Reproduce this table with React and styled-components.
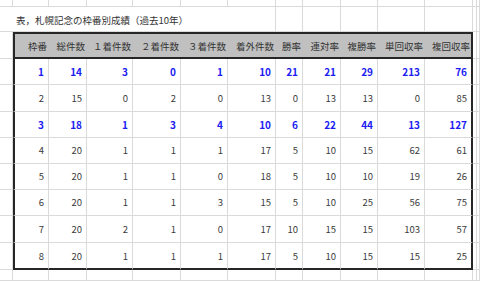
import React from 'react';
import styled, { createGlobalStyle } from 'styled-components';

const GlobalStyle = createGlobalStyle`
  html, body {
    margin: 0;
    padding: 0;
    background: #fff;
  }
`;

// column widths / row heights follow the spreadsheet in the screenshot
const COLS = [13, 36, 38, 46, 48, 47, 48, 27, 38, 37, 47, 48, 4];
const ROWS = [7, 25, 27, 26, 27, 26, 26, 26, 26, 27, 27];

const LINE = '#dadada';
const FRAME = '2px solid #262626';

const HEADERS = ['枠番', '総件数', '１着件数', '２着件数', '３着件数', '着外件数', '勝率', '連対率', '複勝率', '単回収率', '複回収率'];

const DATA = [
  { bold: true, values: [1, 14, 3, 0, 1, 10, 21, 21, 29, 213, 76] },
  { bold: false, values: [2, 15, 0, 2, 0, 13, 0, 13, 13, 0, 85] },
  { bold: true, values: [3, 18, 1, 3, 4, 10, 6, 22, 44, 13, 127] },
  { bold: false, values: [4, 20, 1, 1, 1, 17, 5, 10, 15, 62, 61] },
  { bold: false, values: [5, 20, 1, 1, 0, 18, 5, 10, 10, 19, 26] },
  { bold: false, values: [6, 20, 1, 1, 3, 15, 5, 10, 25, 56, 75] },
  { bold: false, values: [7, 20, 2, 1, 0, 17, 10, 15, 15, 103, 57] },
  { bold: false, values: [8, 20, 1, 1, 1, 17, 5, 10, 15, 15, 25] },
];

const Sheet = styled.div`
  width: 480px;
  height: 281px;
  overflow: hidden;
  display: grid;
  grid-template-columns: ${COLS.map((w) => `${w}px`).join(' ')} 1fr;
  grid-template-rows: ${ROWS.map((h) => `${h}px`).join(' ')} 1fr;
  font-family: "Noto Sans CJK JP", "Noto Sans", sans-serif;
  font-size: 9.5px;
  color: #3a3a3a;
  background: #fff;
`;

const GridCell = styled.div`
  box-sizing: border-box;
  border-right: 1px solid ${LINE};
  border-bottom: 1px solid ${LINE};
`;

const TitleCell = styled(GridCell)`
  grid-column: span 7;
  display: flex;
  align-items: center;
  padding: 1px 0 0 16px;
  color: #333;
  white-space: nowrap;
`;

const HeadCell = styled.div`
  box-sizing: border-box;
  background: #c0c0c0;
  border-top: ${FRAME};
  border-bottom: ${FRAME};
  border-left: ${(p) => (p.$first ? FRAME : 'none')};
  border-right: ${(p) => (p.$last ? FRAME : 'none')};
  display: flex;
  align-items: center;
  justify-content: flex-end;
  padding: 0 ${(p) => (p.$last ? 1 : 2)}px 0 0;
  color: #333;
  white-space: nowrap;
`;

const DataCell = styled.div`
  box-sizing: border-box;
  border-left: ${(p) => (p.$first ? FRAME : 'none')};
  border-right: ${(p) => (p.$last ? FRAME : `1px solid ${LINE}`)};
  border-bottom: ${(p) => (p.$end ? FRAME : `1px solid ${LINE}`)};
  display: flex;
  align-items: center;
  justify-content: flex-end;
  padding: 0 4px ${(p) => (p.$end ? 0 : 1)}px 0;
  font-weight: ${(p) => (p.$bold ? 700 : 400)};
  font-size: ${(p) => (p.$bold ? '10px' : '9.5px')};
  color: ${(p) => (p.$bold ? '#1c1cf2' : '#3a3a3a')};
`;

const blanks = (count, prefix) =>
  Array.from({ length: count }, (_, i) => <GridCell key={`${prefix}-${i}`} />);

export default function App() {
  const lastCol = HEADERS.length - 1;
  return (
    <>
      <GlobalStyle />
      <Sheet>
        {blanks(14, 'top')}

        <TitleCell>表，札幌記念の枠番別成績（過去10年）</TitleCell>
        {blanks(7, 'title')}

        <GridCell />
        {HEADERS.map((h, c) => (
          <HeadCell key={h} $first={c === 0} $last={c === lastCol}>
            {h}
          </HeadCell>
        ))}
        {blanks(2, 'head')}

        {DATA.map((row, r) => (
          <React.Fragment key={r}>
            <GridCell />
            {row.values.map((v, c) => (
              <DataCell
                key={c}
                $bold={row.bold}
                $first={c === 0}
                $last={c === lastCol}
                $end={r === DATA.length - 1}
              >
                {v}
              </DataCell>
            ))}
            {blanks(2, `row${r}`)}
          </React.Fragment>
        ))}

        {blanks(14, 'bottom')}
      </Sheet>
    </>
  );
}
